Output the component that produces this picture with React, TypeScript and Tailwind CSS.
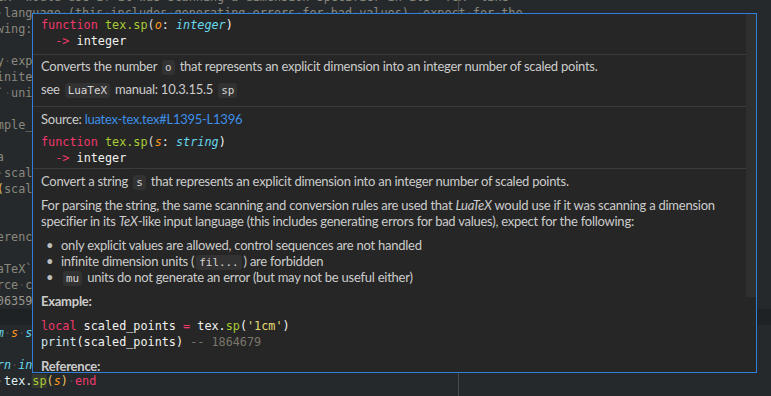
import React from 'react';

type Tok = [string, string?];

const mono = "font-['DejaVu_Sans_Mono','Liberation_Mono',monospace] text-[11.8px] leading-[16px]";
const prose = "font-['Lato','Noto_Sans',sans-serif] text-[13px] leading-[16px] tracking-[-0.25px]";

const C = {
  cmt: 'text-[#8a887c]',
  kw: 'text-[#f0386b]',
  fn: 'text-[#a9cb35]',
  par: 'text-[#fd971f] italic',
  typ: 'text-[#66d9ef] italic',
  str: 'text-[#e6db74]',
  dim: 'text-[#7a776b]',
  brk: 'text-[#e8c35a]',
};

// editor lines, scrolled 60px to the right
const editorLines: Tok[][] = [
  [['---`LuaTeX` would use if it was scanning a dimension specifier in its `TeX`-like', C.cmt]],
  [['---input language (this includes generating errors for bad values), expect for the', C.cmt]],
  [['---following:', C.cmt]],
  [['---', C.cmt]],
  [['---* only explicit values are allowed, control sequences are not handled', C.cmt]],
  [['---* infinite dimension units (`fil...`) are forbidden', C.cmt]],
  [['---* `mu` units do not generate an error (but may not be useful either)', C.cmt]],
  [['---', C.cmt]],
  [['---__Example__:', C.cmt]],
  [['---', C.cmt]],
  [['---```lua', C.cmt]],
  [["---local scaled_points = tex.sp('1cm')", C.cmt]],
  [['---print', C.cmt], ['(', C.brk], ['scaled_points) -- 1864679', C.cmt]],
  [['---```', C.cmt]],
  [['---', C.cmt]],
  [['---__Reference__:', C.cmt]],
  [['---', C.cmt]],
  [['---* `LuaTeX` manual: 10.3.15.5 `sp`', C.cmt]],
  [['---* Source code: [ltexlib.c]', C.cmt]],
  [['---2.3.106359', 'text-[#9a978c]']],
  [['', C.cmt]],
  [['---@param', C.typ], [' '], ['s', C.par], [' '], ['string', C.typ]],
  [['---', C.cmt]],
  [['---@return', C.typ], [' '], ['integer', C.typ]],
  [
    ['function', C.kw],
    [' '],
    ['tex.', 'text-[#dfeef2]'],
    ['sp', C.fn + ' bg-[#34382e]'],
    ['(', C.brk],
    ['s', C.par],
    [')', C.brk],
    [' '],
    ['end', C.kw],
  ],
];

const Ws = ({ text, cls }: { text: string; cls?: string }) => {
  const parts = text.split(/( )/);
  return (
    <span className={cls}>
      {parts.map((p, i) =>
        p === ' ' ? (
          <span key={i} className="text-[#4f4c44]">
            ·
          </span>
        ) : (
          <React.Fragment key={i}>{p}</React.Fragment>
        )
      )}
    </span>
  );
};

const Chip = ({ children }: { children: React.ReactNode }) => (
  <code className="mx-[2px] rounded-[3px] bg-[#323232] px-[3px] py-[1px] font-['DejaVu_Sans_Mono',monospace] text-[10.9px] leading-none tracking-normal text-[#d6d6d6]">
    {children}
  </code>
);

const Bullet = ({ children }: { children: React.ReactNode }) => (
  <li className="flex h-[16px]">
    <span className="w-[20px] pl-[5px] text-[#bdbdbd]">•</span>
    <span>{children}</span>
  </li>
);

const Signature = ({ param, type }: { param: string; type: string }) => (
  <div className={`${mono} whitespace-pre text-[#f2f2ee]`}>
    <div>
      <span className={C.kw}>function</span> <span className={C.fn}>tex.sp</span>
      <span className="text-[#d8d8d8]">(</span>
      <span className={C.par}>{param}</span>: <span className={C.typ}>{type}</span>)
    </div>
    <div>
      {'  '}
      <span className={C.kw}>-&gt;</span> integer
    </div>
  </div>
);

const HoverWidget = () => (
  <div className="absolute left-[32px] top-[13px] h-[360px] w-[725px] overflow-hidden border border-[#2f80dc] bg-[#262626] text-[#cccccc]">
    <div className={`${prose} flex flex-col`}>
      <div className="px-2 pb-[5px] pt-[3px] tracking-normal">
        <Signature param="o" type="integer" />
      </div>
      <div className="border-t border-[#3b3b3b] px-2 pb-[9px] pt-[3px]">
        <p className="h-[16px]">
          Converts the number <Chip>o</Chip> that represents an explicit dimension into an integer number of scaled
          points.
        </p>
        <p className="mt-[7px] h-[16px]">
          see <Chip>LuaTeX</Chip> manual: 10.3.15.5 <Chip>sp</Chip>
        </p>
      </div>
      <div className="border-t border-[#3b3b3b] px-2 pb-[2px] pt-[4px]">
        <p className="h-[16px]">
          Source: <a className="text-[#3d8fe8]">luatex-tex.tex#L1395-L1396</a>
        </p>
        <div className="mt-[7px] tracking-normal">
          <Signature param="s" type="string" />
        </div>
      </div>
      <div className="border-t border-[#3b3b3b] px-2 pt-[4px]">
        <p className="h-[16px]">
          Convert a string <Chip>s</Chip> that represents an explicit dimension into an integer number of scaled
          points.
        </p>
        <p className="mt-[8px] h-[32px] whitespace-nowrap">
          For parsing the string, the same scanning and conversion rules are used that <em>LuaTeX</em> would use if it
          was scanning a dimension
          <br />
          specifier in its <em>TeX</em>-like input language (this includes generating errors for bad values), expect
          for the following:
        </p>
        <ul className="mt-[8px]">
          <Bullet>only explicit values are allowed, control sequences are not handled</Bullet>
          <Bullet>
            infinite dimension units (<Chip>fil...</Chip>) are forbidden
          </Bullet>
          <Bullet>
            <Chip>mu</Chip> units do not generate an error (but may not be useful either)
          </Bullet>
        </ul>
        <p className="mt-[8px] h-[16px] font-bold">Example:</p>
        <div className={`${mono} mt-[9px] whitespace-pre tracking-normal text-[#f2f2ee]`}>
          <div>
            <span className={C.kw}>local</span> scaled_points <span className={C.kw}>=</span> tex.
            <span className={C.fn}>sp</span>(<span className={C.str}>'1cm'</span>)
          </div>
          <div>
            <span className="text-[#cfe6f0]">print</span>(scaled_points) <span className={C.dim}>-- 1864679</span>
          </div>
        </div>
        <p className="mt-[8px] h-[16px] font-bold">Reference:</p>
      </div>
    </div>
    <div className="absolute right-0 top-0 h-[283px] w-[10px] bg-[#2f2f2f]" />
  </div>
);

const App = () => {
  return (
    <div className="relative h-[396px] w-[771px] overflow-hidden bg-[#25292c]">
      <div className={`${mono} -ml-[60px] -mt-[11px] flex flex-col`}>
        {editorLines.map((line, i) => (
          <div key={i} className={`h-[16px] whitespace-pre ${i === 20 ? 'bg-[#1f2225]' : ''}`}>
            {line.map(([t, cls], j) => (
              <Ws key={j} text={t} cls={cls} />
            ))}
          </div>
        ))}
      </div>
      <div className="absolute left-[458px] top-0 h-full w-px bg-[#4a4a4a]" />
      <HoverWidget />
    </div>
  );
};

export default App;
